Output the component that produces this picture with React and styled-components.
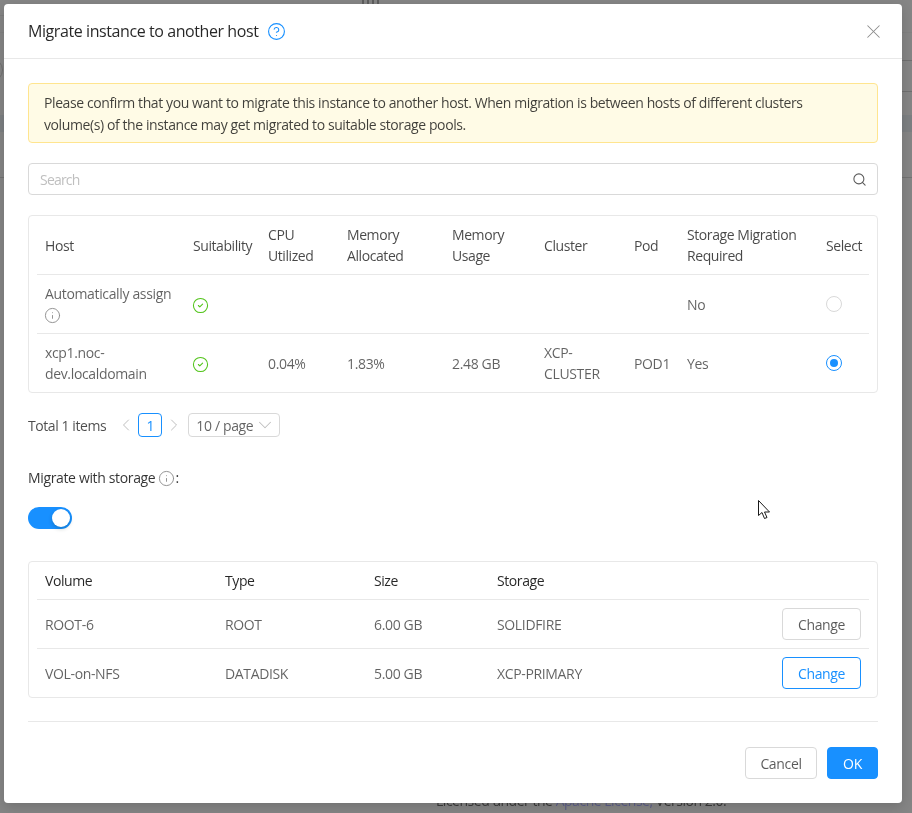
import React from 'react';
import styled, { createGlobalStyle } from 'styled-components';
import { CircleHelp, CircleCheck, Info, Search, X, ChevronLeft, ChevronRight, ChevronDown } from 'lucide-react';

const GlobalStyle = createGlobalStyle`
    html, body {
        margin: 0;
        height: 100%;
        overflow: hidden;
        background: #858585;
        font-family: "Open Sans", "Noto Sans", "Liberation Sans", sans-serif;
        font-size: 14px;
        letter-spacing: -0.35px;
        color: rgba(0, 0, 0, 0.62);
    }
    * {
        box-sizing: border-box;
    }
`;

const PageLine = styled.div`
    position: fixed;
    left: ${props => props.$left || 0}px;
    right: 0;
    width: ${props => props.$width ? props.$width + 'px' : 'auto'};
    top: ${props => props.$top}px;
    height: ${props => props.$height || 1}px;
    background: ${props => props.$color};
`;

const PageCircle = styled.div`
    position: fixed;
    left: -21px;
    top: 58px;
    width: 24px;
    height: 24px;
    border: 1px solid #6f6f6f;
    border-radius: 50%;
`;

const LicenseText = styled.div`
    position: fixed;
    left: 436px;
    top: 790px;
    line-height: 21px;
    letter-spacing: -0.48px;
    color: #3c3c3c;
    white-space: nowrap;
`;

const LicenseLink = styled.span`
    color: #5d5f88;
`;

const PageIcon = styled.div`
    position: fixed;
    left: 362px;
    top: 0;
    width: 18px;
    height: 4px;
    background: repeating-linear-gradient(90deg, #5e5e5e 0 2px, #858585 2px 5px);
`;

const Overlay = styled.div`
    position: fixed;
    inset: 0;
    padding: 4px 10px 10px 4px;
`;

const Modal = styled.div`
    width: 898px;
    height: 799px;
    background: white;
    border-radius: 4px;
    box-shadow: 0 4px 12px rgba(0, 0, 0, 0.15);
`;

const ModalHeader = styled.div`
    height: 55px;
    padding: 0 24px;
    display: flex;
    align-items: center;
    border-bottom: 1px solid #e8e8e8;
`;

const Title = styled.div`
    font-size: 16px;
    line-height: 22px;
    color: rgba(0, 0, 0, 0.85);
    letter-spacing: -0.42px;
    margin-right: 9px;
`;

const CloseButton = styled.div`
    margin-left: auto;
    margin-right: -7px;
    display: flex;
    color: #8c8c8c;
`;

const ModalBody = styled.div`
    padding: 24px;
`;

const Alert = styled.div`
    height: 60px;
    padding: 8px 15px 6px;
    line-height: 22px;
    letter-spacing: -0.4px;
    background: #fffbe6;
    border: 1px solid #ffe58f;
    border-radius: 4px;
    color: rgba(0, 0, 0, 0.75);
    margin-bottom: 20px;
`;

const SearchBox = styled.div`
    height: 32px;
    padding: 0 11px;
    display: flex;
    align-items: center;
    justify-content: space-between;
    border: 1px solid #d9d9d9;
    border-radius: 4px;
    color: #bfbfbf;
    letter-spacing: -0.8px;
    margin-bottom: 20px;
`;

const SearchIcon = styled(Search)`
    color: #595959;
    margin-right: -1px;
`;

const Card = styled.div`
    border: 1px solid #e8e8e8;
    border-radius: 4px;
    padding: 0 8px;
`;

const Table = styled.table`
    width: 100%;
    table-layout: fixed;
    border-collapse: separate;
    border-spacing: 0;
`;

const Th = styled.th`
    padding: 8px;
    font-weight: 400;
    text-align: left;
    line-height: 21px;
    letter-spacing: -0.42px;
    color: ${props => props.$dark ? 'rgba(0, 0, 0, 0.85)' : 'rgba(0, 0, 0, 0.72)'};
    border-bottom: 1px solid #e8e8e8;
`;

const Td = styled.td`
    padding: 8px;
    line-height: 21px;
    border-bottom: 1px solid #e8e8e8;
    tr:last-child & {
        border-bottom: none;
    }
`;

const ButtonCell = styled(Td)`
    text-align: right;
`;

const StatusIcon = styled(CircleCheck)`
    display: block;
    color: #52c41a;
    margin: 2px 0 0 -1px;
`;

const InfoIcon = styled(Info)`
    display: inline-block;
    vertical-align: -4px;
    margin-left: -1px;
    color: #8c8c8c;
`;

const Radio = styled.span`
    display: block;
    width: 16px;
    height: 16px;
    border-radius: 50%;
    border: 1px solid ${props => props.$checked ? '#1890ff' : '#d9d9d9'};
    position: relative;
    &::after {
        content: '';
        display: ${props => props.$checked ? 'block' : 'none'};
        position: absolute;
        top: 3px;
        left: 3px;
        width: 8px;
        height: 8px;
        border-radius: 50%;
        background: #1890ff;
    }
`;

const Pagination = styled.div`
    display: flex;
    align-items: center;
    height: 24px;
    margin-top: 20px;
`;

const Total = styled.span`
    margin-right: 12px;
    letter-spacing: -0.42px;
    color: rgba(0, 0, 0, 0.7);
`;

const PageArrow = styled.span`
    display: flex;
    width: 16px;
    justify-content: center;
    color: #bfbfbf;
    svg {
        flex-shrink: 0;
    }
`;

const PageNumber = styled.span`
    width: 24px;
    height: 24px;
    margin: 0 4px;
    display: flex;
    align-items: center;
    justify-content: center;
    color: #1890ff;
    border: 1px solid #1890ff;
    border-radius: 4px;
`;

const PageSize = styled.span`
    width: 92px;
    height: 24px;
    margin-left: 6px;
    padding: 0 7px;
    display: flex;
    align-items: center;
    justify-content: space-between;
    border: 1px solid #d9d9d9;
    border-radius: 4px;
    svg {
        color: #bfbfbf;
        flex-shrink: 0;
        margin-right: -4px;
    }
`;

const FormLabel = styled.div`
    line-height: 22px;
    margin-top: 30px;
    color: rgba(0, 0, 0, 0.8);
    display: flex;
    align-items: center;
    gap: 3px;
    svg {
        margin: 0 -3px 0 0;
    }
`;

const Switch = styled.div`
    width: 44px;
    height: 22px;
    margin: 18px 0 32px;
    border-radius: 11px;
    background: #1890ff;
    position: relative;
    &::after {
        content: '';
        position: absolute;
        top: 2px;
        right: 2px;
        width: 18px;
        height: 18px;
        border-radius: 50%;
        background: white;
        box-shadow: 0 2px 4px rgba(0, 35, 11, 0.2);
    }
`;

const Button = styled.button`
    height: 32px;
    padding: 0;
    width: ${props => props.$width}px;
    font: inherit;
    letter-spacing: inherit;
    border-radius: 4px;
    border: 1px solid ${props => props.$focus || props.$primary ? '#1890ff' : '#d9d9d9'};
    background: ${props => props.$primary ? '#1890ff' : 'white'};
    color: ${props => props.$primary ? 'white' : props.$focus ? '#1890ff' : 'rgba(0, 0, 0, 0.65)'};
`;

const Divider = styled.div`
    height: 1px;
    margin: 23px 0 25px;
    background: #e8e8e8;
`;

const Footer = styled.div`
    display: flex;
    justify-content: flex-end;
    gap: 10px;
`;

const StorageRow = styled.div`
    display: flex;
    align-items: center;
    justify-content: space-between;
    text-align: left;
`;

const Cursor = styled.svg`
    position: fixed;
    left: 758px;
    top: 500px;
`;

const hostWidths = [148, 75, 79, 105, 92, 90, 53, 139, 51];
const volumeWidths = [180, 149, 123, 380];

const hostHeads = ['Host', 'Suitability', 'CPU Utilized', 'Memory Allocated', 'Memory Usage', 'Cluster', 'Pod', 'Storage Migration Required', 'Select'];

const volumes = [
    { name: 'ROOT-6', type: 'ROOT', size: '6.00 GB', storage: 'SOLIDFIRE' },
    { name: 'VOL-on-NFS', type: 'DATADISK', size: '5.00 GB', storage: 'XCP-PRIMARY', focus: true }
];

const Columns = ({ widths }) => (
    <colgroup>
        {widths.map((w, i) => <col key={i} width={w} />)}
    </colgroup>
);

const App = () => {
    return (
        <>
            <GlobalStyle />
            <PageLine $top={15} $width={4} $color="#7d7d7d" />
            <PageLine $top={32} $color="#808080" />
            <PageLine $top={60} $left={900} $color="#6f6f6f" />
            <PageLine $top={91} $left={900} $color="#6f6f6f" />
            <PageLine $top={115} $height={17} $color="#7c7f82" />
            <PageLine $top={177} $color="#727272" />
            <PageCircle />
            <PageIcon />
            <LicenseText>Licensed under the <LicenseLink>Apache License,</LicenseLink> Version 2.0.</LicenseText>
            <Overlay>
                <Modal>
                    <ModalHeader>
                        <Title>Migrate instance to another host</Title>
                        <CircleHelp size={19} color="#1890ff" strokeWidth={1.4} />
                        <CloseButton><X size={23} strokeWidth={1.1} /></CloseButton>
                    </ModalHeader>
                    <ModalBody>
                        <Alert>
                            Please confirm that you want to migrate this instance to another host. When migration is between hosts of different clusters volume(s) of the instance may get migrated to suitable storage pools.
                        </Alert>
                        <SearchBox>
                            Search
                            <SearchIcon size={15} strokeWidth={1.7} />
                        </SearchBox>
                        <Card>
                            <Table>
                                <Columns widths={hostWidths} />
                                <thead>
                                    <tr>{hostHeads.map(h => <Th key={h}>{h}</Th>)}</tr>
                                </thead>
                                <tbody>
                                    <tr>
                                        <Td>Automatically assign <InfoIcon size={17} strokeWidth={1.3} /></Td>
                                        <Td><StatusIcon size={17} strokeWidth={1.5} /></Td>
                                        <Td /><Td /><Td /><Td /><Td />
                                        <Td>No</Td>
                                        <Td><Radio /></Td>
                                    </tr>
                                    <tr>
                                        <Td>xcp1.noc-dev.localdomain</Td>
                                        <Td><StatusIcon size={17} strokeWidth={1.5} /></Td>
                                        <Td>0.04%</Td>
                                        <Td>1.83%</Td>
                                        <Td>2.48 GB</Td>
                                        <Td>XCP-CLUSTER</Td>
                                        <Td>POD1</Td>
                                        <Td>Yes</Td>
                                        <Td><Radio $checked /></Td>
                                    </tr>
                                </tbody>
                            </Table>
                        </Card>
                        <Pagination>
                            <Total>Total 1 items</Total>
                            <PageArrow><ChevronLeft size={20} strokeWidth={1.2} /></PageArrow>
                            <PageNumber>1</PageNumber>
                            <PageArrow><ChevronRight size={20} strokeWidth={1.2} /></PageArrow>
                            <PageSize>10 / page<ChevronDown size={22} strokeWidth={1.1} /></PageSize>
                        </Pagination>
                        <FormLabel>
                            Migrate with storage<InfoIcon size={17} strokeWidth={1.3} />:
                        </FormLabel>
                        <Switch />
                        <Card>
                            <Table>
                                <Columns widths={volumeWidths} />
                                <thead>
                                    <tr>
                                        <Th $dark>Volume</Th>
                                        <Th $dark>Type</Th>
                                        <Th $dark>Size</Th>
                                        <Th $dark>Storage</Th>
                                    </tr>
                                </thead>
                                <tbody>
                                    {volumes.map(v => (
                                        <tr key={v.name}>
                                            <Td>{v.name}</Td>
                                            <Td>{v.type}</Td>
                                            <Td>{v.size}</Td>
                                            <ButtonCell>
                                                <StorageRow>
                                                    {v.storage}
                                                    <Button $width={79} $focus={v.focus}>Change</Button>
                                                </StorageRow>
                                            </ButtonCell>
                                        </tr>
                                    ))}
                                </tbody>
                            </Table>
                        </Card>
                        <Divider />
                        <Footer>
                            <Button $width={72}>Cancel</Button>
                            <Button $width={51} $primary>OK</Button>
                        </Footer>
                    </ModalBody>
                </Modal>
            </Overlay>
            <Cursor width="14" height="20" viewBox="0 0 14 20">
                <path d="M0.5 0.5 L0.5 15.5 L4 12.5 L6.5 18.5 L9 17.5 L6.5 12 L11.5 12 Z" fill="white" stroke="#1a1a1a" strokeWidth="1" />
            </Cursor>
        </>
    );
};

export default App;
